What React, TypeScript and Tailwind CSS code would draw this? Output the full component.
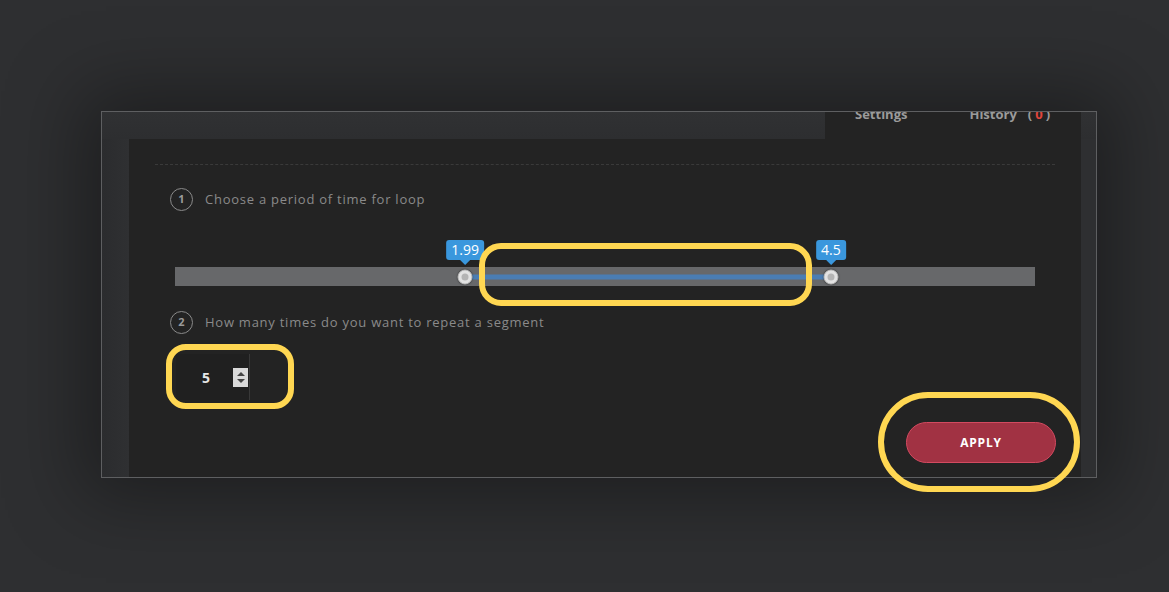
import React from 'react';

const MAX = 5.9;
const range = { from: 1.99, to: 4.5 };

function StepLabel({ n, text }: { n: number; text: string }) {
  return (
    <div className="flex items-center gap-[12px]">
      <div className="w-[23px] h-[23px] rounded-full border-[1.5px] border-[#8a8a8a] flex items-center justify-center text-[11px] font-bold text-[#9a9a9a]">
        {n}
      </div>
      <span className="text-[13px] tracking-[0.75px] text-[#8a8a8a]">{text}</span>
    </div>
  );
}

function Handle({ pct, label }: { pct: number; label: string }) {
  return (
    <div className="absolute top-1/2" style={{ left: `${pct}%` }}>
      <div className="absolute left-0 -translate-x-1/2 -top-[37px] flex flex-col items-center">
        <div className="bg-[#3a97dd] text-white text-[14px] leading-[20px] px-[5px] rounded-[3px]">{label}</div>
        <div className="w-0 h-0 border-l-[5px] border-r-[5px] border-t-[5px] border-l-transparent border-r-transparent border-t-[#3a97dd]" />
      </div>
      <div className="absolute -translate-x-1/2 -translate-y-1/2 w-[15px] h-[15px] rounded-full bg-[#e2e2e2] border border-[#bdbdbd] shadow-[0_0_2px_rgba(0,0,0,0.6)] flex items-center justify-center">
        <div className="w-[7px] h-[7px] rounded-full bg-[#b4b4b4]" />
      </div>
    </div>
  );
}

export default function App() {
  const a = (range.from / MAX) * 100;
  const b = (range.to / MAX) * 100;

  return (
    <div
      className="relative w-[1169px] h-[592px] overflow-hidden bg-[#2e2f31] pt-[111px] pl-[101px]"
      style={{ fontFamily: '"Open Sans", "Liberation Sans", sans-serif' }}
    >
      <div className="w-[996px] h-[367px] border border-[#5e5f61] bg-[#2e2f31] shadow-[0_0_70px_20px_rgba(0,0,0,0.35)] overflow-hidden flex flex-col">
        <div className="h-[27px] flex shrink-0 bg-gradient-to-b from-[#303133] to-[#2d2e30]">
          <div className="flex-1" />
          <div className="w-[256px] mr-[15px] bg-[#232323] relative overflow-hidden">
            <div className="absolute -top-[7px] left-0 right-0 flex text-[13px] leading-[18px] font-bold text-[#9b9b9b]">
              <span className="ml-[30px]">Settings</span>
              <span className="ml-[62px]">History</span>
              <span className="ml-[11px] tracking-[3px]">(<span className="text-[#e0453c]">0</span>)</span>
            </div>
          </div>
        </div>
        <div className="flex-1 flex">
          <div className="w-[27px] bg-gradient-to-r from-[#2b2c2e] to-[#2f3032]" />
          <div className="flex-1 mr-[15px] bg-[#232323] px-[26px] pt-[25px]">
            <div className="border-t border-dashed border-[#3a3a3a]" />
            <div className="pl-[15px] pt-[23px]">
              <StepLabel n={1} text="Choose a period of time for loop" />
            </div>
            <div className="px-[20px] pt-[56px]">
              <div className="relative h-[19px] bg-[#67686a]">
                <div
                  className="absolute top-1/2 -translate-y-1/2 h-[5px] bg-[#4a7db3]"
                  style={{ left: `${a}%`, width: `${b - a}%` }}
                />
                <Handle pct={a} label={String(range.from)} />
                <Handle pct={b} label={String(range.to)} />
              </div>
            </div>
            <div className="pl-[15px] pt-[25px]">
              <StepLabel n={2} text="How many times do you want to repeat a segment" />
            </div>
            <div className="flex items-start justify-between pl-[21px] pt-[20px]">
              <div className="w-[74px] h-[46px] bg-[#202020] border-r border-[#383838] rounded-l-[3px] flex items-center">
                <span className="ml-[26px] text-[14px] font-bold text-[#e6e6e6]">5</span>
                <div className="ml-[23px] w-[15px] h-[19px] bg-[#d9d9d9] flex flex-col items-center justify-center gap-[3px]">
                  <div className="w-0 h-0 border-l-[4px] border-r-[4px] border-b-[4px] border-l-transparent border-r-transparent border-b-[#444]" />
                  <div className="w-0 h-0 border-l-[4px] border-r-[4px] border-t-[4px] border-l-transparent border-r-transparent border-t-[#444]" />
                </div>
              </div>
              <button className="mt-[68px] mr-[-1px] w-[150px] h-[41px] rounded-full bg-[#a13243] border border-[#d34a60] text-white text-[12px] font-bold tracking-[0.8px]">
                APPLY
              </button>
            </div>
          </div>
        </div>
      </div>

      {/* highlight annotations */}
      <div className="absolute left-[479px] top-[243px] w-[333px] h-[63px] border-[6px] border-[#ffd752] rounded-[22px]" />
      <div className="absolute left-[166px] top-[344px] w-[128px] h-[65px] border-[6px] border-[#ffd752] rounded-[20px]" />
      <div className="absolute left-[878px] top-[392px] w-[202px] h-[100px] border-[6px] border-[#ffd752] rounded-full" />
    </div>
  );
}
